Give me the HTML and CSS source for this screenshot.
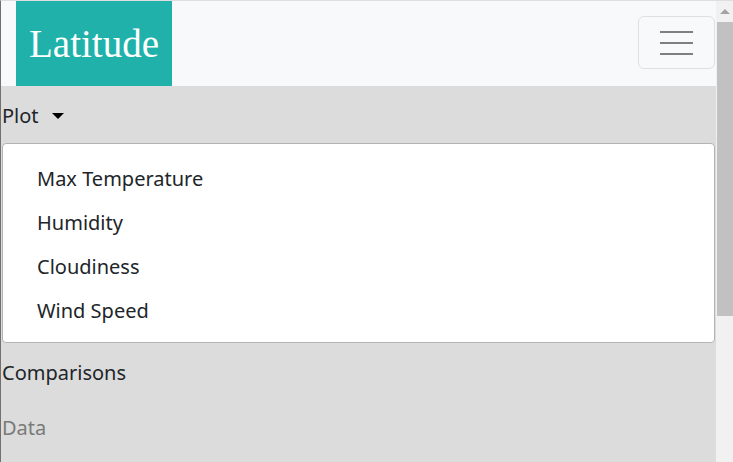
FILE: index.html
```html
<!DOCTYPE html>
<html lang="en">
<head>
<meta charset="utf-8">
<title>Latitude</title>
<link rel="stylesheet" href="styles.css">
</head>
<body>
<div class="frame">
  <div class="page">
    <nav class="navbar">
      <a class="brand" href="#">Latitude</a>
      <button class="toggler" type="button" aria-label="Toggle navigation">
        <span class="bar"></span><span class="bar"></span><span class="bar"></span>
      </button>
    </nav>
    <div class="collapse">
      <ul class="nav">
        <li class="nav-item">
          <a class="nav-link" href="#">Plot<span class="caret"></span></a>
          <div class="dropdown-menu">
            <a class="dropdown-item" href="#">Max Temperature</a>
            <a class="dropdown-item" href="#">Humidity</a>
            <a class="dropdown-item" href="#">Cloudiness</a>
            <a class="dropdown-item" href="#">Wind Speed</a>
          </div>
        </li>
        <li class="nav-item"><a class="nav-link" href="#">Comparisons</a></li>
        <li class="nav-item"><a class="nav-link muted" href="#">Data</a></li>
      </ul>
    </div>
  </div>
  <div class="scrollbar">
    <div class="arrow"></div>
    <div class="thumb"></div>
  </div>
</div>
</body>
</html>
```
FILE: styles.css
```css
* { box-sizing: border-box; }
html, body { margin: 0; padding: 0; }
body {
  width: 733px;
  height: 462px;
  overflow: hidden;
  font-family: "Noto Sans", "Open Sans", sans-serif;
  color: #212529;
}
a { text-decoration: none; color: inherit; }
.frame {
  display: flex;
  height: 462px;
  border-left: 1px solid #707070;
  border-top: 1px solid #dedede;
}
.page {
  flex: 1;
  background: #dcdcdc;
  min-width: 0;
}
.navbar {
  height: 85px;
  background: #f8f9fa;
  display: flex;
  align-items: center;
  justify-content: space-between;
  padding-left: 15px;
  padding-right: 1px;
  padding-bottom: 2px;
}
.brand {
  height: 85px;
  width: 156px;
  background: #20b2aa;
  color: #fff;
  font-family: "Liberation Serif", "Times New Roman", serif;
  font-size: 39px;
  display: flex;
  align-items: center;
  justify-content: center;
  align-self: flex-start;
}
.toggler {
  width: 77px;
  height: 53px;
  border: 1px solid #dfe0e1;
  border-radius: 6px;
  background: transparent;
  display: flex;
  flex-direction: column;
  align-items: center;
  justify-content: center;
  gap: 9px;
  padding: 0;
}
.bar {
  display: block;
  width: 33px;
  height: 2px;
  background: #7f7f7f;
}
.nav {
  list-style: none;
  margin: 0;
  padding: 0;
}
.nav-link {
  display: block;
  font-size: 20px;
  line-height: 30px;
  padding: 15px 0 11px 1px;
}
.muted {
  color: #7a7a7a;
  padding: 14px 0 12px 1px;
}
.caret {
  display: inline-block;
  vertical-align: 4px;
  margin-left: 13px;
  border-top: 6px solid #000;
  border-left: 6px solid transparent;
  border-right: 6px solid transparent;
}
.dropdown-menu {
  margin: 1px 1px 0 1px;
  background: #fff;
  border: 1px solid #b3b3b3;
  border-radius: 4px;
  padding: 13px 0 9px;
  height: 200px;
}
.dropdown-item {
  display: block;
  font-size: 20px;
  line-height: 30px;
  padding: 7px 34px;
  color: #212529;
}
.scrollbar {
  width: 17px;
  background: #f1f1f1;
  display: flex;
  flex-direction: column;
}
.arrow {
  height: 21px;
  display: flex;
  justify-content: center;
  padding-top: 8px;
}
.arrow::before {
  content: "";
  border-bottom: 5px solid #a3a3a3;
  border-left: 5px solid transparent;
  border-right: 5px solid transparent;
  height: 0;
}
.thumb {
  height: 294px;
  margin-left: 1px;
  background: #c1c1c1;
}
```
